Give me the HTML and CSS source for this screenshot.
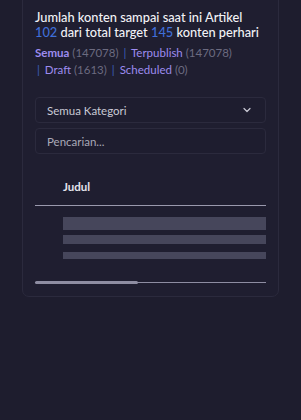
FILE: index.html
```html
<!DOCTYPE html>
<html lang="id">
<head>
    <meta charset="UTF-8">
    <meta name="viewport" content="width=device-width, initial-scale=1.0">
    <title>Konten Artikel</title>
    <link rel="stylesheet" href="styles.css">
</head>
<body>
    <div class="page">
        <div class="card">
            <h2 class="summary">Jumlah konten sampai saat ini Artikel <span class="num">102</span> dari total target <span class="num">145</span> konten perhari</h2>
            <div class="filters">
                <a href="#" class="filter current">Semua</a> <span class="count">(147078)</span>
                <span class="sep">|</span>
                <a href="#" class="filter">Terpublish</a> <span class="count">(147078)</span>
                <br>
                <span class="sep">|</span>
                <a href="#" class="filter">Draft</a> <span class="count">(1613)</span>
                <span class="sep">|</span>
                <a href="#" class="filter">Scheduled</a> <span class="count">(0)</span>
            </div>

            <div class="field select">
                <span>Semua Kategori</span>
                <svg width="10" height="10" viewBox="0 0 10 10"><path d="M2 3.5 L5 6.5 L8 3.5" fill="none" stroke="#c9c9d4" stroke-width="1.2" stroke-linecap="round" stroke-linejoin="round"/></svg>
            </div>
            <div class="field">
                <span class="placeholder">Pencarian...</span>
            </div>

            <div class="table">
                <div class="thead">Judul</div>
                <div class="tbody">
                    <div class="skel skel-1"></div>
                    <div class="skel skel-2"></div>
                    <div class="skel skel-3"></div>
                </div>
                <div class="scrollbar"><div class="thumb"></div></div>
            </div>
        </div>
    </div>
</body>
</html>
```

FILE: styles.css
```css
body {
    margin: 0;
    padding: 0;
    background-color: #1e1d2e;
    font-family: "Lato", Arial, sans-serif;
}
.page {
    padding: 0 22px;
}
.card {
    margin-top: -10px;
    padding: 19px 12px 13px;
    background-color: #1f1e30;
    border: 1px solid #2b2a3d;
    border-radius: 7px;
}
.summary {
    margin: 0;
    font-size: 12.8px;
    font-weight: 500;
    line-height: 15px;
    color: #f2f2f6;
}
.num {
    color: #3f6fd8;
}
.filters {
    margin-top: 4px;
    font-size: 11.5px;
    line-height: 17px;
    color: #6c6b80;
}
.filter {
    color: #9d8cef;
    text-decoration: none;
}
.filter.current {
    font-weight: 700;
}
.sep {
    color: #3d5fb8;
    margin: 0 2px;
}
.field {
    margin-top: 5px;
    height: 26px;
    padding: 0 11px;
    display: flex;
    align-items: center;
    justify-content: space-between;
    border: 1px solid #2b2a3d;
    border-radius: 4px;
    background-color: #1e1d2f;
    font-size: 11.5px;
    color: #c9c9d4;
    box-sizing: border-box;
}
.select {
    margin-top: 19px;
    padding-right: 13px;
}
.placeholder {
    color: #a9a9b8;
}
.table {
    margin-top: 26px;
}
.thead {
    padding: 0 28px 12px;
    font-size: 11.5px;
    font-weight: 700;
    color: #e4e4ec;
    border-bottom: 1px solid #9a99ad;
}
.tbody {
    padding: 11px 0 23px 28px;
}
.skel {
    background-color: #46465b;
}
.skel-1 {
    height: 13px;
}
.skel-2 {
    height: 9px;
    margin-top: 5px;
}
.skel-3 {
    height: 7px;
    margin-top: 8px;
}
.scrollbar {
    height: 1px;
    background-color: #8e8da2;
    position: relative;
}
.thumb {
    position: absolute;
    left: 0;
    top: -1px;
    width: 103px;
    height: 3px;
    border-radius: 2px;
    background-color: #8e8da2;
}
```
